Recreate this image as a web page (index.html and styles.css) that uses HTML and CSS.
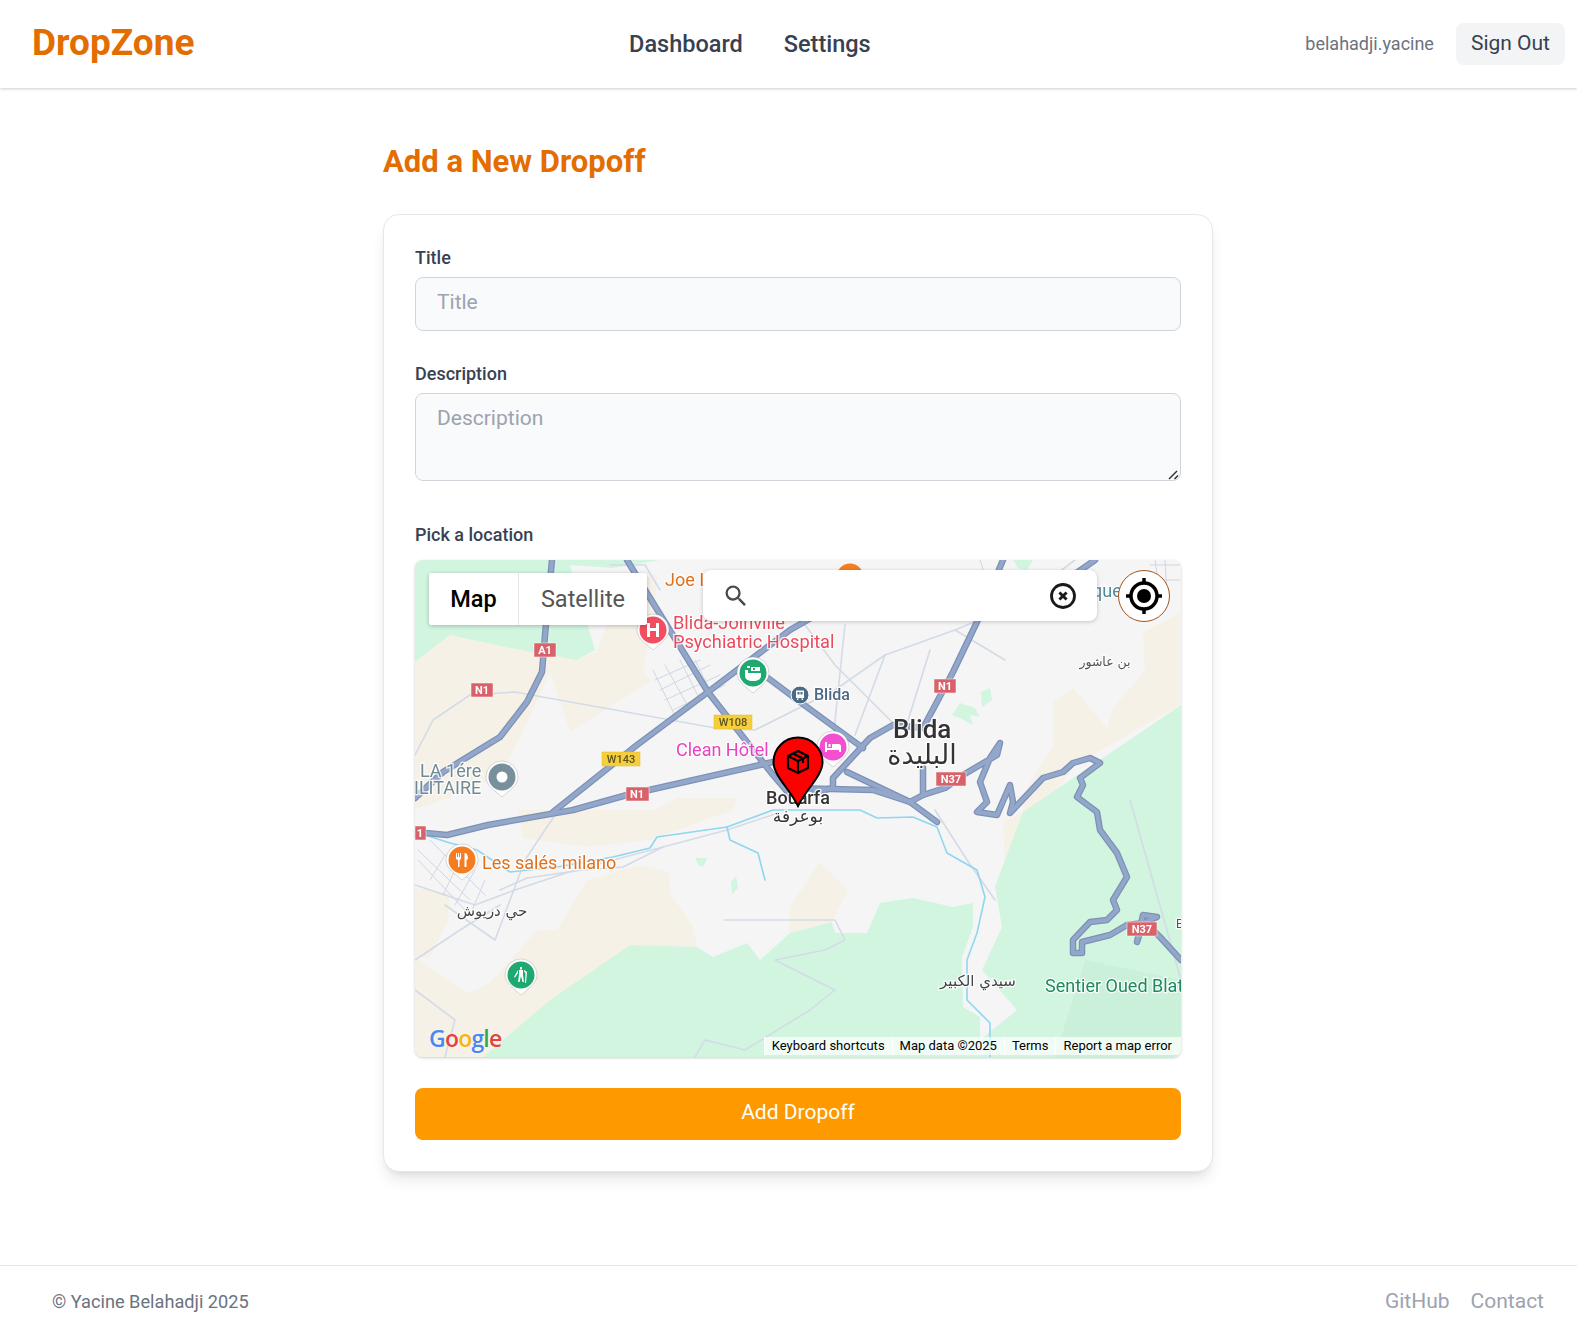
FILE: index.html
```html
<!DOCTYPE html>
<html lang="en">
<head>
    <meta charset="UTF-8">
    <title>DropZone</title>
    <link rel="stylesheet" href="styles.css">
</head>
<body>
    <header class="topbar">
        <a class="logo">DropZone</a>
        <nav class="main-nav">
            <a>Dashboard</a>
            <a>Settings</a>
        </nav>
        <div class="user-box">
            <span class="username">belahadji.yacine</span>
            <button class="signout-btn">Sign Out</button>
        </div>
    </header>

    <main class="page">
        <h1 class="page-title">Add a New Dropoff</h1>
        <form class="card">
            <div class="field">
                <label>Title</label>
                <input class="text-input" type="text" placeholder="Title">
            </div>
            <div class="field field-desc">
                <label>Description</label>
                <div class="desc-box">
                    <textarea class="text-input text-area" placeholder="Description"></textarea>
                    <svg class="grip" width="12" height="12" viewBox="0 0 12 12"><path d="M1 11L9 3M6.500 11L10 7.500"/></svg>
                </div>
            </div>
            <div class="field field-map">
                <label class="label-map">Pick a location</label>
                <div class="map">
                    <svg class="map-canvas" viewBox="0 0 766 497" width="766" height="497">
                        <defs>
                            <g id="main-roads">
                                <path d="M137 0L130 75L127 112L112 142L85 177L28 212L0 238"/>
                                <path d="M0 272L32 275L73 265L158 250L212 235L358 202"/>
                                <path d="M138 252L222 185L293 132L375 70L410 50"/>
                                <path d="M212 0L235 38L293 132L332 182L358 215L375 235"/>
                                <path d="M353 118L385 142L448 188"/>
                                <path d="M400 232L418 228L418 218L455 178L478 165L508 168L538 112L562 62L588 0"/>
                                <path d="M375 228L458 230L495 242L508 235L508 208"/>
                                <path d="M432 212L495 242L522 262"/>
                                <path d="M508 235L530 228L548 215L582 195L585 183L575 198L565 222L572 242L562 252L582 255L595 225L598 242L595 253L628 218L648 212L658 203L675 198L685 203L665 218L668 225L662 237L682 252L685 270L702 293L712 317L698 340L702 350L692 360L675 362L658 380L658 393L667 393L667 382L695 375L712 365L728 363L722 382L728 355L742 357L730 362L745 377L766 400"/>
                                <path d="M680 0L660 14"/>
                            </g>
                        </defs>

                        <rect class="land" width="766" height="497"/>

                        <!-- beige -->
                        <path class="beige" d="M0 102L35 75L95 88L162 100L182 92L200 40L242 12L240 50L228 108L235 122L155 172L135 112L108 172L85 215L40 235L0 250Z"/>
                        <path class="beige" d="M0 397L52 433L75 423L122 370L142 370L172 320L225 305L255 313L255 333L278 367L282 387L215 385L135 440L68 497L0 497Z"/>
                        <path class="beige" d="M103 250L108 278L172 287L235 280L318 250L322 238L262 238L240 250Z"/>
                        <path class="beige" d="M0 328L35 333L33 360L15 397L0 397Z"/>
                        <path class="beige" d="M375 373L417 362L433 330L405 302L375 347Z"/>
                        <path class="beige" d="M765 53L728 72L730 110L698 148L692 168L658 128L638 142L638 185L608 235L608 252L588 262L590 310L580 327L615 267L660 205L765 145Z"/>

                        <!-- green -->
                        <path class="green" d="M0 0L0 102L35 75L95 88L162 100L180 90L155 5L198 8L245 0Z"/>
                        <path class="green" d="M68 497L135 440L215 385L282 387L298 397L332 383L345 400L375 373L417 362L420 373L452 373L465 343L498 338L538 347L558 343L558 367L547 397L548 447L565 457L565 497Z"/>
                        <path class="green" d="M766 145L608 252L580 327L587 367L567 410L602 450L565 480L565 497L766 497Z"/>
                        <path class="green-dark" d="M640 497L670 400L766 420L766 497Z"/>
                        <path class="green" d="M537 155L545 143L560 148L565 157L555 155L558 165L545 158Z"/>
                        <path class="green" d="M566 132L575 128L577 140L567 147Z"/>
                        <path class="green" d="M598 0L618 0L612 10L603 8Z"/>
                        <path class="green" d="M280 298L292 298L289 306L284 306Z"/>
                        <path class="green" d="M316 322L321 316L323 328L317 334Z"/>

                        <!-- thin roads -->
                        <g class="road-thin">
                            <path d="M0 195L18 160L55 135L100 132L200 150L300 168L340 170L420 130L470 95L540 70L600 45L660 0"/>
                            <path d="M195 5L230 5L245 30"/>
                            <path d="M375 45L420 105L480 165"/>
                            <path d="M470 95L440 175"/>
                            <path d="M430 65L418 180"/>
                            <path d="M515 90L490 170"/>
                            <path d="M540 70L590 100"/>
                            <path d="M0 325L60 345L100 330L160 310L248 287L312 270L360 254"/>
                            <path d="M85 330L112 318L168 310L208 307L248 287"/>
                            <path d="M30 345L80 380L110 300L140 255"/>
                            <path d="M0 400L45 370L85 345"/>
                            <path d="M0 430L40 460L30 497"/>
                            <path d="M280 497L290 480L330 490L395 450L420 430L380 410L360 400L410 390L430 380L420 360L310 360"/>
                            <path d="M520 250L552 300L580 340"/>
                            <path d="M715 240L766 420"/>
                        </g>
                        <g class="road-town">
                            <path d="M240 120L285 100M245 130L295 105M250 140L305 115M258 150L310 125M238 110L262 160M250 105L275 150M265 100L285 140M280 100L295 130"/>
                            <path d="M3 290L55 340M3 300L50 350M15 280L70 335M30 295L15 320M45 300L28 335M60 310L40 345M70 320L55 355"/>
                            <path d="M565 0L575 30M740 0L745 35M735 5L765 5M735 20L765 20M750 0L752 35"/>
                        </g>

                        <!-- water -->
                        <g class="water">
                            <path d="M10 275L35 283L62 290L95 312L142 307L198 297L235 288L242 277L312 267L358 250L445 250L462 258L498 257L522 267L532 293L562 310L570 337L562 373L552 400L552 440L575 463L575 497"/>
                            <path d="M312 267L315 280L343 293L350 320"/>
                            <path d="M650 35L665 50L680 55"/>
                        </g>

                        <use href="#main-roads" class="road-case"/>
                        <use href="#main-roads" class="road-fill"/>

                        <!-- road shields -->
                        <g class="shield-red">
                            <rect x="119" y="83" width="22" height="14"/><text x="130" y="94">A1</text>
                            <rect x="56" y="123" width="22" height="14"/><text x="67" y="134">N1</text>
                            <rect x="211" y="227" width="23" height="14"/><text x="222" y="238">N1</text>
                            <rect x="519" y="119" width="22" height="14"/><text x="530" y="130">N1</text>
                            <rect x="521" y="212" width="30" height="14"/><text x="536" y="223">N37</text>
                            <rect x="712" y="362" width="30" height="14"/><text x="727" y="373">N37</text>
                            <rect x="0" y="266" width="11" height="14"/><text x="5" y="277">1</text>
                        </g>
                        <g class="shield-yellow">
                            <rect x="299" y="155" width="38" height="14"/><text x="318" y="166">W108</text>
                            <rect x="187" y="192" width="38" height="14"/><text x="206" y="203">W143</text>
                        </g>

                        <!-- labels -->
                        <g class="label">
                            <text class="lb-orange" x="250" y="26">Joe I</text>
                            <text class="lb-red" x="258" y="69">Blida-Joinville</text>
                            <text class="lb-red" x="258" y="88">Psychiatric Hospital</text>
                            <text class="lb-pink" x="261" y="196">Clean Hôtel</text>
                            <text class="lb-grey" x="5" y="217">LA 1ére</text>
                            <text class="lb-grey" x="-1" y="234">ILITAIRE</text>
                            <text class="lb-station" x="399" y="140">Blida</text>
                            <text class="lb-city" x="478" y="178">Blida</text>
                            <text class="lb-city-ar" x="507" y="204">البليدة</text>
                            <text class="lb-town" x="383" y="244">Bouarfa</text>
                            <text class="lb-town-ar" x="383" y="262">بوعرفة</text>
                            <text class="lb-small-ar" x="690" y="106">بن عاشور</text>
                            <text class="lb-mid-ar" x="77" y="356">حي دريوش</text>
                            <text class="lb-mid-ar" x="563" y="426">سيدي الكبير</text>
                            <text class="lb-green" x="630" y="432">Sentier Oued Blat</text>
                            <text class="lb-orange" x="67" y="309">Les salés milano</text>
                            <text class="lb-teal" x="677" y="37">que</text>
                            <text class="lb-edge" x="761" y="368">E</text>
                        </g>

                        <!-- pins -->
                        <g class="pin pin-red" transform="translate(238 70)">
                            <path class="pin-halo" d="M-16 0A16 16 0 1 1 16 0C16 8 8 13 0 20C-8 13 -16 8 -16 0Z"/>
                            <circle r="13.500"/>
                            <path class="pin-glyph" d="M-6 -7H-3V-2H3V-7H6V7H3V1H-3V7H-6Z"/>
                        </g>
                        <g class="pin pin-green" transform="translate(338 113)">
                            <path class="pin-halo" d="M-16 0A16 16 0 1 1 16 0C16 8 8 13 0 20C-8 13 -16 8 -16 0Z"/>
                            <circle r="13.500"/>
                            <path class="pin-glyph" d="M-8 -3H-5V0H8V3C8 6 5 8 0 8C-5 8 -8 6 -8 3ZM-2 -6H7V-2H-2ZM0 -5V-3H2V-5ZM-6 -7H-3V-5H-6Z"/>
                        </g>
                        <g class="pin pin-slate" transform="translate(87 217)">
                            <path class="pin-halo" d="M-16 0A16 16 0 1 1 16 0C16 8 8 13 0 20C-8 13 -16 8 -16 0Z"/>
                            <circle r="13.500"/>
                            <circle class="pin-glyph" r="5.500"/>
                        </g>
                        <g class="pin pin-orange" transform="translate(47 300)">
                            <path class="pin-halo" d="M-16 0A16 16 0 1 1 16 0C16 8 8 13 0 20C-8 13 -16 8 -16 0Z"/>
                            <circle r="13.500"/>
                            <path class="pin-glyph" d="M-6 -7H-5V-3H-4V-7H-3V-3H-2V-7H-1V-1L-2.5 0V7H-4V0L-6 -1ZM3 -7C5 -7 6 -4 6 -1L4.5 0V7H2.5V-7Z"/>
                        </g>
                        <g class="pin pin-green" transform="translate(106 415)">
                            <path class="pin-halo" d="M-16 0A16 16 0 1 1 16 0C16 8 8 13 0 20C-8 13 -16 8 -16 0Z"/>
                            <circle r="13.500"/>
                            <path class="pin-glyph" d="M-1 -8H1V-5.500H-1ZM-2 -5H2V0L3 7H1.500L0 1L-1.500 7H-3L-2 0ZM3 -5L6 -3L5 8H4L4.500 -2L3 -3.500ZM-3 -5L-7 2L-6 2.500L-3 -2Z"/>
                        </g>
                        <g class="pin pin-pink" transform="translate(418 187)">
                            <path class="pin-halo" d="M-16 0A16 16 0 1 1 16 0C16 8 8 13 0 20C-8 13 -16 8 -16 0Z"/>
                            <circle r="13.500"/>
                            <path class="pin-glyph" d="M-8 -5H-6V1H-1V-3H6C7 -3 8 -2 8 -1V5H6V3H-6V5H-8ZM-4.500 -3H-2.500V0H-4.500Z"/>
                        </g>
                        <g class="pin pin-orange" transform="translate(435 17)">
                            <circle r="13.500"/>
                        </g>
                        <g class="station" transform="translate(385 135)">
                            <circle r="9"/>
                            <path d="M-4 -4.500H4V3H-4ZM-2.500 -3V-.5H-.5V-3ZM.5 -3V-.5H2.500V-3ZM-3 3.500H-1L-2 5H-3ZM1 3.500H3V5H2Z"/>
                        </g>

                        <!-- dropoff marker -->
                        <g transform="translate(383 202)">
                            <path class="marker" d="M0 44C-8 27 -24.500 14 -24.500 0A24.500 24.500 0 1 1 24.500 0C24.500 14 8 27 0 44Z"/>
                            <g class="marker-box">
                                <path d="M0 -11L10 -6V6L0 11L-10 6V-6Z"/>
                                <path d="M-10 -6L0 -1L10 -6M0 -1V11M-5 -8.500L5 -3.500V1"/>
                            </g>
                        </g>
                    </svg>

                    <div class="map-types">
                        <button type="button" class="map-type active">Map</button>
                        <button type="button" class="map-type">Satellite</button>
                    </div>

                    <div class="map-search">
                        <svg class="search-icon" width="28" height="28" viewBox="0 0 24 24"><path d="M15.500 14h-.79l-.28-.27A6.471 6.471 0 0 0 16 9.500 6.500 6.500 0 1 0 9.500 16c1.610 0 3.090-.59 4.230-1.570l.27.28v.79l5 4.990L20.490 19l-4.990-5zm-6 0C7.010 14 5 11.990 5 9.500S7.010 5 9.500 5 14 7.010 14 9.500 11.990 14 9.500 14z"/></svg>
                        <svg class="clear-icon" width="28" height="28" viewBox="0 0 28 28">
                            <circle cx="14" cy="14" r="11.500"/>
                            <path d="M9.500 9.500L18.500 18.500M18.500 9.500L9.500 18.500"/>
                        </svg>
                    </div>

                    <button type="button" class="locate-btn">
                        <svg width="38" height="38" viewBox="0 0 38 38">
                            <circle class="locate-ring" cx="19" cy="19" r="13"/>
                            <circle cx="19" cy="19" r="7"/>
                            <path class="locate-tick" d="M19 1V7M19 31V37M1 19H7M31 19H37"/>
                        </svg>
                    </button>

                    <div class="google-logo"><span class="g-blue">G</span><span class="g-red">o</span><span class="g-yellow">o</span><span class="g-blue">g</span><span class="g-green">l</span><span class="g-red">e</span></div>

                    <div class="map-attrib">
                        <span>Keyboard shortcuts</span>
                        <span>Map data ©2025</span>
                        <span>Terms</span>
                        <span>Report a map error</span>
                    </div>
                </div>
            </div>
            <button type="button" class="submit-btn">Add Dropoff</button>
        </form>
    </main>

    <footer class="footer">
        <span class="copyright">© Yacine Belahadji 2025</span>
        <div class="footer-links">
            <a>GitHub</a>
            <a>Contact</a>
        </div>
    </footer>
</body>
</html>
```

FILE: styles.css
```css
* {
    box-sizing: border-box;
}

body {
    margin: 0;
    min-height: 100vh;
    display: flex;
    flex-direction: column;
    background: #ffffff;
    font-family: Roboto, "Liberation Sans", sans-serif;
    color: #374151;
}

/* top bar */
.topbar {
    height: 88px;
    display: flex;
    justify-content: space-between;
    align-items: center;
    padding: 0 12px 0 32px;
    background: #fff;
    box-shadow: 0 1px 3px rgba(0, 0, 0, 0.2);
}

.logo {
    padding-bottom: 3px;
    font-size: 37px;
    font-weight: 700;
    color: #e36d00;
}

.main-nav {
    display: flex;
    gap: 41px;
    font-size: 23.500px;
    font-weight: 500;
}

.user-box {
    display: flex;
    align-items: center;
    gap: 22px;
}

.username {
    padding-bottom: 2px;
    font-size: 18px;
    color: #6b7280;
}

.signout-btn {
    height: 42px;
    padding: 0 15px 2px;
    border: none;
    border-radius: 8px;
    background: #f3f4f6;
    font: inherit;
    font-size: 21px;
    color: #374151;
}

/* form */
.page {
    width: 830px;
    margin-left: 383px;
    padding-top: 56px;
}

.page-title {
    margin: 0 0 34px;
    font-size: 31px;
    line-height: 36px;
    font-weight: 700;
    color: #e36d00;
}

.card {
    padding: 31px;
    border: 1px solid #e5e7eb;
    border-radius: 16px;
    background: #fff;
    box-shadow: 0 10px 15px -3px rgba(0, 0, 0, 0.1), 0 4px 6px -4px rgba(0, 0, 0, 0.1);
}

.field {
    margin-bottom: 31px;
}

.field-desc {
    margin-bottom: 42px;
}

.field label {
    display: block;
    margin-bottom: 7px;
    font-size: 18px;
    line-height: 24px;
    font-weight: 500;
}

.field .label-map {
    margin-bottom: 13px;
}

.text-input {
    display: block;
    width: 100%;
    height: 54px;
    padding: 0 21px 4px;
    border: 1px solid #d1d5db;
    border-radius: 8px;
    background: #f9fafb;
    font: inherit;
    font-size: 21px;
    color: #374151;
}

.text-input::placeholder {
    color: #9ca3af;
}

.desc-box {
    position: relative;
}

.text-area {
    height: 88px;
    padding-top: 11px;
    line-height: 26px;
    resize: none;
}

.grip {
    position: absolute;
    right: 1px;
    bottom: 1px;
}

.grip path {
    fill: none;
    stroke: #333;
    stroke-width: 1.5;
}

/* map */
.map {
    position: relative;
    width: 766px;
    height: 497px;
    border-radius: 8px;
    overflow: hidden;
    box-shadow: 0 1px 3px rgba(0, 0, 0, 0.2);
}

.map-canvas {
    display: block;
    filter: blur(0.35px);
}

.land { fill: #f5f5f6; }
.beige { fill: #f6f1e7; }
.green { fill: #d2f5e0; }
.green-dark { fill: #cbf0da; }

.road-thin path, .road-town path, .water path, .road-case, .road-fill {
    fill: none;
    stroke-linejoin: round;
    stroke-linecap: round;
}

.road-thin path { stroke: #d3dbe6; stroke-width: 1.6; }
.road-town path { stroke: #cfd7e2; stroke-width: 1; }
.water path { stroke: #8fd6ee; stroke-width: 1.6; }
.road-case { stroke: #7d91b6; stroke-width: 6.500; }
.road-fill { stroke: #93a7ca; stroke-width: 4; }

.shield-red rect { fill: #d9626a; stroke: #fff; stroke-width: 0.5; }
.shield-yellow rect { fill: #f5cf3b; stroke: #e6b82a; stroke-width: 0.5; }

.shield-red text, .shield-yellow text {
    font-size: 11px;
    font-weight: 700;
    text-anchor: middle;
}

.shield-red text { fill: #fff; }
.shield-yellow text { fill: #5c5320; font-weight: 500; }

.label text {
    stroke: rgba(255, 255, 255, 0.85);
    stroke-width: 2.5px;
    paint-order: stroke;
}

.lb-orange { font-size: 18px; fill: #e0701a; }
.lb-red { font-size: 18.200px; fill: #ea4a5c; }
.lb-pink { font-size: 18px; fill: #ea3fc0; }
.lb-grey { font-size: 18px; fill: #6f8a96; }
.lb-station { font-size: 16px; fill: #4d6a85; font-weight: 500; }
.lb-city { font-size: 26px; fill: #333; font-weight: 500; }
.lb-city-ar { font-size: 27px; fill: #333; text-anchor: middle; font-family: "DejaVu Sans", sans-serif; }
.lb-town { font-size: 18px; fill: #333; font-weight: 500; text-anchor: middle; }
.lb-town-ar { font-size: 17px; fill: #333; text-anchor: middle; font-family: "DejaVu Sans", sans-serif; }
.lb-small-ar { font-size: 12.500px; fill: #555; text-anchor: middle; font-family: "DejaVu Sans", sans-serif; }
.lb-mid-ar { font-size: 15px; fill: #444; text-anchor: middle; font-family: "DejaVu Sans", sans-serif; }
.lb-green { font-size: 18px; fill: #1f8a5f; }
.lb-teal { font-size: 18px; fill: #4f8a9a; }
.lb-edge { font-size: 12px; fill: #555; }

.pin-halo { fill: #fff; stroke: rgba(0, 0, 0, 0.15); stroke-width: 1; }
.pin-glyph { fill: #fff; }
.pin-red > circle:not(.pin-glyph) { fill: #f24e5f; }
.pin-green > circle:not(.pin-glyph) { fill: #1fa971; }
.pin-slate > circle:not(.pin-glyph) { fill: #78909c; }
.pin-orange > circle:not(.pin-glyph) { fill: #f57c1f; }
.pin-pink > circle:not(.pin-glyph) { fill: #f34fd0; }

.station circle { fill: #4d6a85; stroke: #fff; stroke-width: 1; }
.station path { fill: #fff; }

.marker { fill: #ff0000; stroke: #000; stroke-width: 2; }
.marker-box path { fill: none; stroke: #000; stroke-width: 2.2; stroke-linejoin: round; }

.map-types {
    position: absolute;
    top: 13px;
    left: 14px;
    display: flex;
    height: 52px;
    border-radius: 3px;
    background: #fff;
    box-shadow: 0 1px 4px rgba(0, 0, 0, 0.25);
    overflow: hidden;
}

.map-type {
    border: none;
    background: #fff;
    font: inherit;
    font-size: 23.500px;
    color: #565656;
}

.map-type:first-child {
    width: 90px;
    border-right: 1px solid #e6e6e6;
}

.map-type:last-child {
    width: 128px;
}

.map-type.active {
    font-weight: 500;
    color: #000;
}

.map-search {
    position: absolute;
    top: 10px;
    left: 288px;
    width: 394px;
    height: 51px;
    display: flex;
    justify-content: space-between;
    align-items: center;
    padding: 0 6px 0 19px;
    border-radius: 8px;
    background: #fff;
    box-shadow: 0 1px 4px rgba(0, 0, 0, 0.2);
}

.search-icon { fill: #4a4a4a; }
.clear-icon { margin-right: 14px; }
.clear-icon circle { fill: none; stroke: #1a1a1a; stroke-width: 2.8; }
.clear-icon path { fill: none; stroke: #1a1a1a; stroke-width: 3.600; transform: scale(0.8); transform-origin: 14px 14px; }

.locate-btn {
    position: absolute;
    top: 10px;
    left: 703px;
    width: 52px;
    height: 52px;
    display: flex;
    align-items: center;
    justify-content: center;
    padding: 0;
    border: 1px solid #a5541a;
    border-radius: 50%;
    background: #fff;
}

.locate-ring { fill: none; stroke: #000; stroke-width: 3.500; }
.locate-tick { fill: none; stroke: #000; stroke-width: 3.500; }

.google-logo {
    position: absolute;
    left: 14px;
    bottom: 4px;
    font-family: "Open Sans", sans-serif;
    font-size: 23px;
    line-height: 30px;
    letter-spacing: -0.8px;
    font-weight: 600;
    text-shadow: 0 0 2px #fff;
}

.g-blue { color: #4b87f0; }
.g-red { color: #e5433a; }
.g-yellow { color: #f5b50c; }
.g-green { color: #2fa84f; }

.map-attrib {
    position: absolute;
    right: 0;
    bottom: 2px;
    display: flex;
    height: 18px;
    padding-right: 2px;
    background: rgba(255, 255, 255, 0.7);
    font-size: 13px;
    line-height: 18px;
    color: #000;
}

.map-attrib span {
    padding: 0 7px;
    border-left: 1px solid rgba(255, 255, 255, 0.8);
}

.submit-btn {
    display: block;
    width: 100%;
    height: 52px;
    padding-bottom: 6px;
    border: none;
    border-radius: 8px;
    background: #ff9900;
    font: inherit;
    font-size: 21px;
    color: #fff;
}

/* footer */
.footer {
    margin-top: auto;
    height: 73px;
    display: flex;
    justify-content: space-between;
    align-items: center;
    padding: 0 33px 2px 52px;
    border-top: 1px solid #e5e7eb;
}

.copyright {
    font-size: 18.200px;
    color: #6b7280;
}

.footer-links {
    display: flex;
    gap: 21px;
    font-size: 21px;
    color: #9ca3af;
}
```
